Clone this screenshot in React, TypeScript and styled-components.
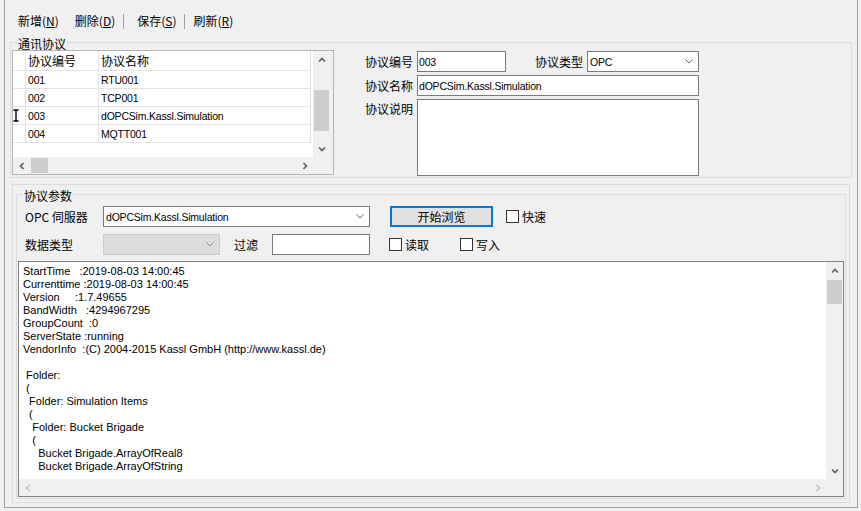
import React from "react";
import styled, { createGlobalStyle } from "styled-components";

const cjk = `"Noto Sans CJK SC", "Liberation Sans", sans-serif`;
const latin = `"Liberation Sans", "Noto Sans CJK SC", sans-serif`;

const protocols = [
  { id: "001", name: "RTU001" },
  { id: "002", name: "TCP001" },
  { id: "003", name: "dOPCSim.Kassl.Simulation", current: true },
  { id: "004", name: "MQTT001" },
];

const logText = [
  "StartTime   :2019-08-03 14:00:45",
  "Currenttime :2019-08-03 14:00:45",
  "Version     :1.7.49655",
  "BandWidth   :4294967295",
  "GroupCount  :0",
  "ServerState :running",
  "VendorInfo  :(C) 2004-2015 Kassl GmbH (http://www.kassl.de)",
  "",
  " Folder:",
  " (",
  "  Folder: Simulation Items",
  "  (",
  "   Folder: Bucket Brigade",
  "   (",
  "     Bucket Brigade.ArrayOfReal8",
  "     Bucket Brigade.ArrayOfString",
].join("\n");

const GlobalStyle = createGlobalStyle`
  html, body { margin: 0; padding: 0; background: #f0f0f0; }
  body { font-family: ${cjk}; font-size: 12px; color: #000; }
  * { box-sizing: border-box; }
`;

type Dir = "up" | "down" | "left" | "right";

function Arrow({ dir, color = "#606060" }: { dir: Dir; color?: string }) {
  const pts = {
    up: "1,5.5 4,2.5 7,5.5",
    down: "1,2.5 4,5.5 7,2.5",
    left: "5.5,1 2.5,4 5.5,7",
    right: "2.5,1 5.5,4 2.5,7",
  }[dir];
  return (
    <svg width="8" height="8" viewBox="0 0 8 8">
      <polyline points={pts} fill="none" stroke={color} strokeWidth="1.7" />
    </svg>
  );
}

function Chevron({ color = "#606060" }: { color?: string }) {
  return (
    <svg width="8" height="5" viewBox="0 0 8 5">
      <polyline points="0.5,0.5 4,4 7.5,0.5" fill="none" stroke={color} strokeWidth="1" />
    </svg>
  );
}

interface ScrollProps {
  vertical?: boolean;
  thumb?: { offset: number; size: number };
  arrowColor?: string;
}

function ScrollBar({ vertical, thumb, arrowColor }: ScrollProps) {
  return (
    <Scroll $vertical={vertical}>
      <ScrollButton>
        <Arrow dir={vertical ? "up" : "left"} color={arrowColor} />
      </ScrollButton>
      <Track $vertical={vertical}>
        {thumb && <Thumb $vertical={vertical} $offset={thumb.offset} $size={thumb.size} />}
      </Track>
      <ScrollButton>
        <Arrow dir={vertical ? "down" : "right"} color={arrowColor} />
      </ScrollButton>
    </Scroll>
  );
}

function Check({ label }: { label: string }) {
  return (
    <CheckWrap>
      <CheckBox />
      <span>{label}</span>
    </CheckWrap>
  );
}

function IBeam() {
  return (
    <svg width="6" height="13" viewBox="0 0 6 13">
      <path d="M0,1 H6 M3,1 V12 M0,12 H6" stroke="#fff" strokeWidth="3" />
      <path d="M0.5,1 H5.5 M3,1 V12 M0.5,12 H5.5" stroke="#000" strokeWidth="1.4" />
    </svg>
  );
}

export default function App() {
  return (
    <>
      <GlobalStyle />
      <Window>
        <Toolbar>
          <ToolItem>新增(<u>N</u>)</ToolItem>
          <ToolItem>删除(<u>D</u>)</ToolItem>
          <ToolSep $after={5} />
          <ToolItem>保存(<u>S</u>)</ToolItem>
          <ToolSep $after={0} />
          <ToolItem>刷新(<u>R</u>)</ToolItem>
        </Toolbar>

        <GroupBox $height={144}>
          <Legend>通讯协议</Legend>
          <TopBody>
            <DataGrid>
              <GridData>
                <GridRow $header>
                  <RowHead />
                  <Cell>协议编号</Cell>
                  <Cell>协议名称</Cell>
                </GridRow>
                {protocols.map((p) => (
                  <GridRow key={p.id}>
                    <RowHead>{p.current && <IBeam />}</RowHead>
                    <Cell $latin>{p.id}</Cell>
                    <Cell $latin>{p.name}</Cell>
                  </GridRow>
                ))}
              </GridData>
              <ScrollBar vertical thumb={{ offset: 22, size: 41 }} />
              <ScrollBar thumb={{ offset: 1, size: 17 }} />
              <Corner />
            </DataGrid>

            <Form>
              <FormRow>
                <FormLabel $width={83}>协议编号</FormLabel>
                <TextBox $width={89} readOnly value="003" />
                <FormLabel $gap={29}>协议类型</FormLabel>
                <ComboBox $width={112}>
                  <span>OPC</span>
                  <Chevron />
                </ComboBox>
              </FormRow>
              <FormRow>
                <FormLabel $width={83}>协议名称</FormLabel>
                <TextBox $width={282} readOnly value="dOPCSim.Kassl.Simulation" />
              </FormRow>
              <FormRow $top>
                <FormLabel $width={83} $top>协议说明</FormLabel>
                <MemoBox />
              </FormRow>
            </Form>
          </TopBody>
        </GroupBox>

        <Panel>
          <GroupBox $height={313}>
            <Legend>协议参数</Legend>
            <ParamRow>
              <ParamLabel>OPC 伺服器</ParamLabel>
              <ComboBox $width={267}>
                <span>dOPCSim.Kassl.Simulation</span>
                <Chevron />
              </ComboBox>
              <Button $gap={20}>开始浏览</Button>
              <Spacer $w={13} />
              <Check label="快速" />
            </ParamRow>
            <ParamRow $gap={7}>
              <ParamLabel>数据类型</ParamLabel>
              <ComboBox $width={117} $disabled>
                <span />
                <Chevron color="#8a8a8a" />
              </ComboBox>
              <Spacer $w={14} />
              <span>过滤</span>
              <Spacer $w={14} />
              <TextBox $width={98} readOnly value="" />
              <Spacer $w={19} />
              <Check label="读取" />
              <Spacer $w={31} />
              <Check label="写入" />
            </ParamRow>
            <LogBox>
              <LogText>{logText}</LogText>
              <ScrollBar vertical thumb={{ offset: 1, size: 24 }} />
              <ScrollBar arrowColor="#c4c4c4" />
              <Corner />
            </LogBox>
          </GroupBox>
        </Panel>
      </Window>
    </>
  );
}

const Window = styled.div`
  margin-left: 4px;
  width: 854px;
  height: 508px;
  border: 1px solid #a0a0a0;
  border-top: none;
  padding: 0 5px;
  display: flex;
  flex-direction: column;
`;

const Toolbar = styled.div`
  display: flex;
  align-items: center;
  height: 34px;
  padding-top: 8px;
`;

const ToolItem = styled.div`
  padding: 0 8px;
  line-height: 16px;
  white-space: nowrap;
`;

const ToolSep = styled.div<{ $after: number }>`
  width: 1px;
  height: 15px;
  background: #a0a0a0;
  margin-right: ${(p) => p.$after}px;
`;

const GroupBox = styled.fieldset<{ $height: number }>`
  margin: 0;
  padding: 0 0 0 1px;
  min-width: 0;
  height: ${(p) => p.$height}px;
  border: 1px solid #dcdcdc;
`;

const Legend = styled.legend`
  margin-left: 5px;
  padding: 4px 1px 0;
  line-height: 12px;
  font-size: 12px;
`;

const TopBody = styled.div`
  display: flex;
  align-items: flex-start;
`;

const DataGrid = styled.div`
  width: 322px;
  height: 125px;
  border: 1px solid #b4b4b4;
  padding-right: 3px;
  background: #f0f0f0;
  display: grid;
  grid-template-columns: 1fr 17px;
  grid-template-rows: 1fr 17px;
`;

const GridData = styled.div`
  overflow: hidden;
  background: #fff;
`;

const GridRow = styled.div<{ $header?: boolean }>`
  display: grid;
  grid-template-columns: 13px 73px 212px;
  height: ${(p) => (p.$header ? 20 : 18)}px;
`;

const RowHead = styled.div`
  border-right: 1px solid #e2e2e2;
  border-bottom: 1px solid #e2e2e2;
  display: flex;
  align-items: center;
`;

const Cell = styled.div<{ $latin?: boolean }>`
  border-right: 1px solid #e2e2e2;
  border-bottom: 1px solid #e2e2e2;
  padding-left: 2px;
  display: flex;
  align-items: center;
  white-space: nowrap;
  font-family: ${(p) => (p.$latin ? latin : cjk)};
  font-size: ${(p) => (p.$latin ? "10.5px" : "12px")};
  letter-spacing: ${(p) => (p.$latin ? "-0.2px" : "0")};
`;

const Scroll = styled.div<{ $vertical?: boolean }>`
  display: flex;
  flex-direction: ${(p) => (p.$vertical ? "column" : "row")};
  background: #f0f0f0;
`;

const ScrollButton = styled.div`
  flex: none;
  width: 17px;
  height: 17px;
  display: flex;
  align-items: center;
  justify-content: center;
`;

const Track = styled.div<{ $vertical?: boolean }>`
  flex: 1;
  display: flex;
  flex-direction: ${(p) => (p.$vertical ? "column" : "row")};
`;

const Thumb = styled.div<{ $vertical?: boolean; $offset: number; $size: number }>`
  flex: none;
  background: #cdcdcd;
  ${(p) =>
    p.$vertical
      ? `margin: ${p.$offset}px 1px 0; height: ${p.$size}px;`
      : `margin: 1px 0 1px ${p.$offset}px; width: ${p.$size}px;`}
`;

const Corner = styled.div`
  background: #f0f0f0;
`;

const Form = styled.div`
  display: flex;
  flex-direction: column;
  gap: 3px;
  padding-top: 1px;
`;

const FormRow = styled.div<{ $top?: boolean }>`
  display: flex;
  align-items: ${(p) => (p.$top ? "flex-start" : "center")};
`;

const FormLabel = styled.div<{ $width?: number; $gap?: number; $top?: boolean }>`
  ${(p) => (p.$width ? `width: ${p.$width}px; text-align: right;` : "")}
  margin-left: ${(p) => p.$gap ?? 0}px;
  padding-right: 4px;
  padding-top: ${(p) => (p.$top ? 2 : 0)}px;
  line-height: 16px;
  white-space: nowrap;
`;

const TextBox = styled.input<{ $width: number }>`
  width: ${(p) => p.$width}px;
  height: 21px;
  margin: 0;
  border: 1px solid #7a7a7a;
  border-radius: 0;
  padding: 0 1px;
  background: #fff;
  color: #000;
  font-family: ${latin};
  font-size: 10.5px;
  letter-spacing: -0.2px;
  outline: none;
`;

const ComboBox = styled.div<{ $width: number; $disabled?: boolean }>`
  width: ${(p) => p.$width}px;
  height: 21px;
  border: 1px solid ${(p) => (p.$disabled ? "#cccccc" : "#7a7a7a")};
  background: ${(p) => (p.$disabled ? "#dddddd" : "#fff")};
  padding: 0 5px 0 2px;
  display: flex;
  align-items: center;
  justify-content: space-between;
  font-family: ${latin};
  font-size: 10.5px;
  letter-spacing: -0.2px;
  white-space: nowrap;
`;

const MemoBox = styled.div`
  width: 282px;
  height: 77px;
  border: 1px solid #7a7a7a;
  background: #fff;
`;

const Panel = styled.div`
  margin: 6px 2px 0;
  height: 319px;
  border: 1px solid #dcdcdc;
  padding: 1px 3px 3px;
`;

const ParamRow = styled.div<{ $gap?: number }>`
  display: flex;
  align-items: center;
  padding-left: 7px;
  margin-top: ${(p) => p.$gap ?? 4}px;
  line-height: 16px;
`;

const ParamLabel = styled.div`
  width: 78px;
  white-space: nowrap;
`;

const Button = styled.div<{ $gap: number }>`
  margin-left: ${(p) => p.$gap}px;
  width: 103px;
  height: 21px;
  border: 2px solid #0078d7;
  background: #e1e1e1;
  display: flex;
  align-items: center;
  justify-content: center;
`;

const Spacer = styled.div<{ $w: number }>`
  flex: none;
  width: ${(p) => p.$w}px;
`;

const CheckWrap = styled.div`
  display: flex;
  align-items: center;
  gap: 3px;
  white-space: nowrap;
`;

const CheckBox = styled.div`
  width: 13px;
  height: 13px;
  border: 1px solid #333;
  background: #fff;
`;

const LogBox = styled.div`
  margin-top: 6px;
  width: 826px;
  height: 236px;
  border: 1px solid #828282;
  background: #fff;
  display: grid;
  grid-template-columns: 1fr 17px;
  grid-template-rows: 1fr 17px;
`;

const LogText = styled.div`
  padding: 3px 0 0 4px;
  font-family: ${latin};
  font-size: 11px;
  line-height: 13px;
  white-space: pre;
  overflow: hidden;
`;
